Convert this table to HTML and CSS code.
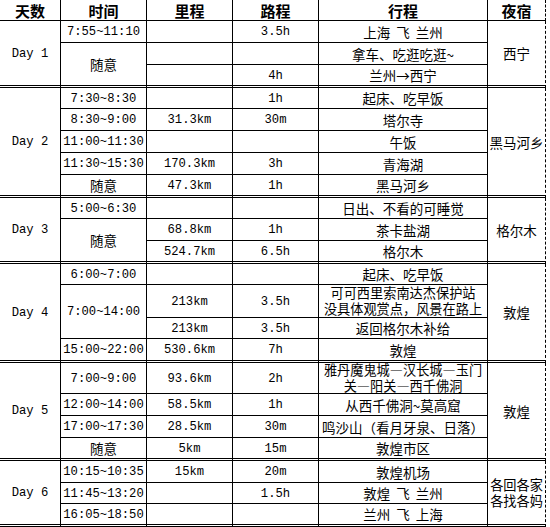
FILE: index.html
```html
<!DOCTYPE html>
<html lang="zh-CN">
<head>
<meta charset="utf-8">
<title>行程表</title>
<link rel="stylesheet" href="styles.css">
</head>
<body>
<div class="sheet">
  <div class="grid">
    <div class="c hd">天数</div>
    <div class="c hd">时间</div>
    <div class="c hd">里程</div>
    <div class="c hd">路程</div>
    <div class="c hd">行程</div>
    <div class="c hd last">夜宿</div>

    <!-- Day 1 -->
    <div class="c num e s3">Day 1</div>
    <div class="c num">7:55~11:10</div>
    <div class="c num"></div>
    <div class="c num">3.5h</div>
    <div class="c cj">上海 飞 兰州</div>
    <div class="c cj e s3 last">西宁</div>
    <div class="c cj e s2">随意</div>
    <div class="c num"></div>
    <div class="c num"></div>
    <div class="c cj">拿车、吃逛吃逛~</div>
    <div class="c num e"></div>
    <div class="c num e">4h</div>
    <div class="c cj e">兰州→西宁</div>

    <!-- Day 2 -->
    <div class="c num e s5">Day 2</div>
    <div class="c num">7:30~8:30</div>
    <div class="c num"></div>
    <div class="c num">1h</div>
    <div class="c cj">起床、吃早饭</div>
    <div class="c cj e s5 last">黑马河乡</div>
    <div class="c num">8:30~9:00</div>
    <div class="c num">31.3km</div>
    <div class="c num">30m</div>
    <div class="c cj">塔尔寺</div>
    <div class="c num">11:00~11:30</div>
    <div class="c num"></div>
    <div class="c num"></div>
    <div class="c cj">午饭</div>
    <div class="c num">11:30~15:30</div>
    <div class="c num">170.3km</div>
    <div class="c num">3h</div>
    <div class="c cj">青海湖</div>
    <div class="c cj e">随意</div>
    <div class="c num e">47.3km</div>
    <div class="c num e">1h</div>
    <div class="c cj e">黑马河乡</div>

    <!-- Day 3 -->
    <div class="c num e s3">Day 3</div>
    <div class="c num">5:00~6:30</div>
    <div class="c num"></div>
    <div class="c num"></div>
    <div class="c cj">日出、不看的可睡觉</div>
    <div class="c cj e s3 last">格尔木</div>
    <div class="c cj e s2">随意</div>
    <div class="c num">68.8km</div>
    <div class="c num">1h</div>
    <div class="c cj">茶卡盐湖</div>
    <div class="c num e">524.7km</div>
    <div class="c num e">6.5h</div>
    <div class="c cj e">格尔木</div>

    <!-- Day 4 -->
    <div class="c num e s4">Day 4</div>
    <div class="c num">6:00~7:00</div>
    <div class="c num"></div>
    <div class="c num"></div>
    <div class="c cj">起床、吃早饭</div>
    <div class="c cj e s4 last">敦煌</div>
    <div class="c num s2">7:00~14:00</div>
    <div class="c num">213km</div>
    <div class="c num">3.5h</div>
    <div class="c cj wrap">可可西里索南达杰保护站<br>没具体观赏点，风景在路上</div>
    <div class="c num">213km</div>
    <div class="c num">3.5h</div>
    <div class="c cj">返回格尔木补给</div>
    <div class="c num e">15:00~22:00</div>
    <div class="c num e">530.6km</div>
    <div class="c num e">7h</div>
    <div class="c cj e">敦煌</div>

    <!-- Day 5 -->
    <div class="c num e s4">Day 5</div>
    <div class="c num">7:00~9:00</div>
    <div class="c num">93.6km</div>
    <div class="c num">2h</div>
    <div class="c cj wrap">雅丹魔鬼城—汉长城—玉门<br>关—阳关—西千佛洞</div>
    <div class="c cj e s4 last">敦煌</div>
    <div class="c num">12:00~14:00</div>
    <div class="c num">58.5km</div>
    <div class="c num">1h</div>
    <div class="c cj">从西千佛洞~莫高窟</div>
    <div class="c num">17:00~17:30</div>
    <div class="c num">28.5km</div>
    <div class="c num">30m</div>
    <div class="c cj">鸣沙山（看月牙泉、日落）</div>
    <div class="c cj e">随意</div>
    <div class="c num e">5km</div>
    <div class="c num e">15m</div>
    <div class="c cj e">敦煌市区</div>

    <!-- Day 6 -->
    <div class="c num e s3">Day 6</div>
    <div class="c num">10:15~10:35</div>
    <div class="c num">15km</div>
    <div class="c num">20m</div>
    <div class="c cj">敦煌机场</div>
    <div class="c cj e s3 last wrap">各回各家<br>各找各妈</div>
    <div class="c num">11:45~13:20</div>
    <div class="c num"></div>
    <div class="c num">1.5h</div>
    <div class="c cj">敦煌 飞 兰州</div>
    <div class="c num e">16:05~18:50</div>
    <div class="c num e"></div>
    <div class="c num e"></div>
    <div class="c cj e">兰州 飞 上海</div>
  </div>
</div>
</body>
</html>
```

FILE: styles.css
```css
html, body {
  margin: 0;
  padding: 0;
  background: #fff;
}

.sheet {
  width: 550px;
  height: 527px;
  overflow: hidden;
  background: #fff;
}

.grid {
  display: grid;
  grid-template-columns: 61px 86px 86px 86px 169px 58px;
  grid-template-rows:
    21px
    22px 22px 23px
    21px 22px 22px 22px 23px
    21px 22px 23px
    21px 33px 21px 24px
    31px 22px 22px 23px
    22px 21px 23px;
  color: #000;
}

.c {
  box-sizing: border-box;
  border-right: 1px solid #000;
  border-bottom: 1px solid #000;
  display: flex;
  align-items: center;
  justify-content: center;
  text-align: center;
  white-space: nowrap;
  overflow: visible;
  padding-top: 1px;
}

.c.e {
  border-bottom: 3px double #000;
}

.c.last {
  border-right: 1px dashed #000;
}

.s2 { grid-row: span 2; }
.s3 { grid-row: span 3; }
.s4 { grid-row: span 4; }
.s5 { grid-row: span 5; }

.hd {
  font-family: "Noto Sans CJK SC", sans-serif;
  font-weight: 700;
  font-size: 15px;
  line-height: 16px;
}

.num {
  font-family: "Liberation Mono", monospace;
  font-size: 12.2px;
  line-height: 14px;
}

.cj {
  font-family: "Noto Sans CJK SC", sans-serif;
  font-size: 13.5px;
  line-height: 15px;
  word-spacing: 3px;
}

.wrap {
  font-size: 13.2px;
  line-height: 16px;
  padding-top: 0;
}
```
